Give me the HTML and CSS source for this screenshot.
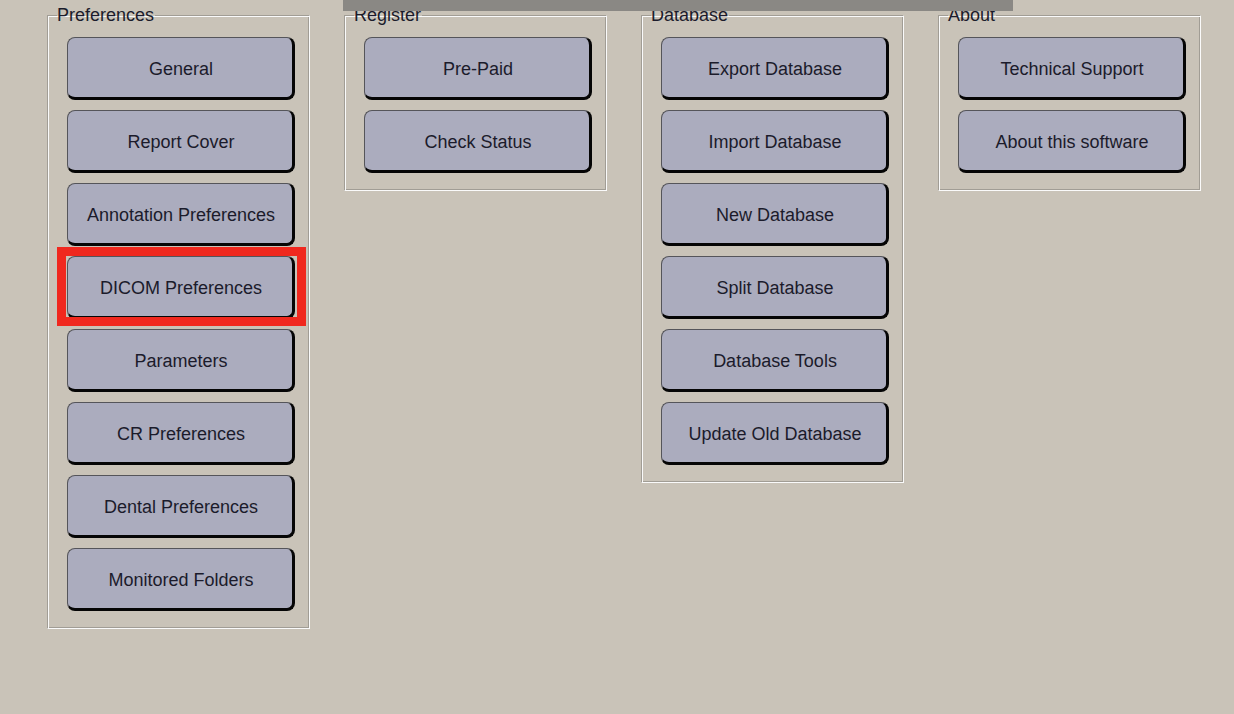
FILE: index.html
```html
<!DOCTYPE html>
<html lang="en">
<head>
    <meta charset="UTF-8">
    <meta name="viewport" content="width=device-width, initial-scale=1.0">
    <title>Settings</title>
    <link rel="stylesheet" href="styles.css">
</head>
<body>
    <div class="top-bar"></div>

    <div class="groups">
        <fieldset class="group">
            <legend>Preferences</legend>
            <div class="buttons">
                <div class="btn">General</div>
                <div class="btn">Report Cover</div>
                <div class="btn">Annotation Preferences</div>
                <div class="btn selected">DICOM Preferences</div>
                <div class="btn">Parameters</div>
                <div class="btn">CR Preferences</div>
                <div class="btn">Dental Preferences</div>
                <div class="btn">Monitored Folders</div>
            </div>
        </fieldset>

        <fieldset class="group">
            <legend>Register</legend>
            <div class="buttons">
                <div class="btn">Pre-Paid</div>
                <div class="btn">Check Status</div>
            </div>
        </fieldset>

        <fieldset class="group">
            <legend>Database</legend>
            <div class="buttons">
                <div class="btn">Export Database</div>
                <div class="btn">Import Database</div>
                <div class="btn">New Database</div>
                <div class="btn">Split Database</div>
                <div class="btn">Database Tools</div>
                <div class="btn">Update Old Database</div>
            </div>
        </fieldset>

        <fieldset class="group">
            <legend>About</legend>
            <div class="buttons">
                <div class="btn">Technical Support</div>
                <div class="btn">About this software</div>
            </div>
        </fieldset>
    </div>
</body>
</html>
```

FILE: styles.css
```css
body {
    margin: 0;
    width: 1234px;
    height: 714px;
    background-color: #c9c3b8;
    color: #1b1b2b;
    overflow: hidden;
    font-family: "Liberation Sans", Arial, sans-serif;
    font-size: 18px;
    position: relative;
}
.top-bar {
    position: absolute;
    left: 343px;
    top: 0;
    width: 670px;
    height: 11px;
    background-color: #8a8884;
}
.groups {
    display: flex;
    align-items: flex-start;
    gap: 34px;
    padding-left: 47px;
    padding-top: 5px;
}
.group {
    box-sizing: border-box;
    width: 263px;
    margin: 0;
    padding: 0 9px 17px 9px;
    border: 1px solid;
    border-color: #a19d95 #fafafa #fafafa #a19d95;
    box-shadow: inset 1px 1px 0 #fafafa, inset -1px -1px 0 #a19d95;
}
.group legend {
    padding: 0 1px 0 0;
    line-height: 20px;
    color: #1b1b2b;
}
.buttons {
    display: flex;
    flex-direction: column;
    gap: 10px;
    padding: 12px 0 0 10px;
}
.btn {
    position: relative;
    box-sizing: border-box;
    width: 228px;
    height: 63px;
    padding: 3px 0 0 2px;
    display: flex;
    align-items: center;
    justify-content: center;
    background-color: #abacbe;
    border-style: solid;
    border-width: 1px 3px 3px 1px;
    border-color: #55555a #050505 #050505 #55555a;
    border-radius: 8px;
    cursor: pointer;
}
.btn.selected::after {
    content: "";
    position: absolute;
    left: -11px;
    top: -10px;
    right: -14px;
    bottom: -10px;
    border: 9px solid #f0281e;
}
```
